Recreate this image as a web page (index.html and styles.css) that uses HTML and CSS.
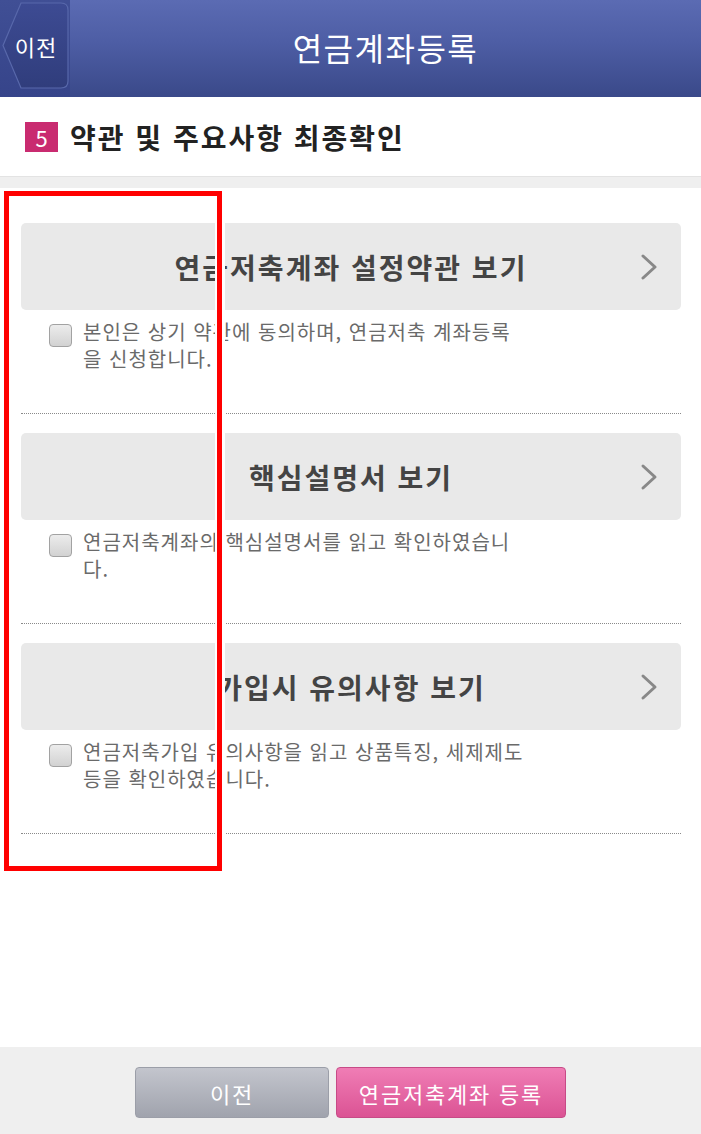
FILE: index.html
```html
<!DOCTYPE html>
<html lang="ko">
<head>
    <meta charset="UTF-8">
    <meta name="viewport" content="width=device-width, initial-scale=1.0">
    <title>연금계좌등록</title>
    <link rel="stylesheet" href="styles.css">
</head>
<body>
    <div class="page">
        <header class="topbar">
            <div class="back-cell">
                <a class="back-btn" href="#">
                    <svg class="back-shape" width="68" height="88" viewBox="0 0 68 88">
                        <defs>
                            <linearGradient id="backfill" x1="0" y1="0" x2="0" y2="1">
                                <stop offset="0" stop-color="#3d4b93"/>
                                <stop offset="1" stop-color="#303d7c"/>
                            </linearGradient>
                        </defs>
                        <path d="M19 1 H59 Q66 1 66 8 V79 Q66 86 59 86 H19 L1 43.5 Z" fill="url(#backfill)" stroke="#5868ab" stroke-width="1.2"/>
                    </svg>
                    <span class="back-label">이전</span>
                </a>
            </div>
            <h1>연금계좌등록</h1>
        </header>

        <div class="step">
            <span class="step-num">5</span>
            <h2>약관 및 주요사항 최종확인</h2>
        </div>
        <div class="divider"></div>

        <main class="terms">
            <section class="term">
                <button class="term-view">
                    <span class="term-title">연금저축계좌 설정약관 보기</span>
                    <svg class="chev" width="18" height="28" viewBox="0 0 18 28"><polyline points="3,3 15,14 3,25" fill="none" stroke="#888" stroke-width="3" stroke-linecap="round" stroke-linejoin="round"/></svg>
                </button>
                <label class="agree">
                    <span class="box"></span>
                    <span class="agree-text">본인은 상기 약관에 동의하며, 연금저축 계좌등록을 신청합니다.</span>
                </label>
            </section>
            <section class="term">
                <button class="term-view">
                    <span class="term-title">핵심설명서 보기</span>
                    <svg class="chev" width="18" height="28" viewBox="0 0 18 28"><polyline points="3,3 15,14 3,25" fill="none" stroke="#888" stroke-width="3" stroke-linecap="round" stroke-linejoin="round"/></svg>
                </button>
                <label class="agree">
                    <span class="box"></span>
                    <span class="agree-text">연금저축계좌의 핵심설명서를 읽고 확인하였습니다.</span>
                </label>
            </section>
            <section class="term">
                <button class="term-view">
                    <span class="term-title">가입시 유의사항 보기</span>
                    <svg class="chev" width="18" height="28" viewBox="0 0 18 28"><polyline points="3,3 15,14 3,25" fill="none" stroke="#888" stroke-width="3" stroke-linecap="round" stroke-linejoin="round"/></svg>
                </button>
                <label class="agree">
                    <span class="box"></span>
                    <span class="agree-text">연금저축가입 유의사항을 읽고 상품특징, 세제제도 등을 확인하였습니다.</span>
                </label>
            </section>
        </main>

        <footer class="actions">
            <button class="btn btn-prev">이전</button>
            <button class="btn btn-submit">연금저축계좌 등록</button>
        </footer>

        <div class="mark"></div>
    </div>
</body>
</html>
```

FILE: styles.css
```css
* {
    box-sizing: border-box;
}
body {
    margin: 0;
    font-family: "Noto Sans CJK KR", "Noto Sans", sans-serif;
    background: #fff;
}
.page {
    position: relative;
    width: 701px;
    min-height: 1134px;
    display: flex;
    flex-direction: column;
}
.topbar {
    display: flex;
    height: 97px;
    background: linear-gradient(#5b6bb3, #4d5da4 45%, #3a4989);
}
.back-cell {
    width: 70px;
    padding: 2px 0 0 2px;
    background: linear-gradient(#404f95, #36448a);
}
.back-btn {
    display: grid;
    width: 68px;
    height: 88px;
    text-decoration: none;
}
.back-shape,
.back-label {
    grid-area: 1 / 1;
}
.back-label {
    align-self: center;
    justify-self: center;
    color: #fff;
    font-size: 22px;
    letter-spacing: 1px;
    line-height: 1;
}
.topbar h1 {
    flex: 1;
    margin: 0;
    text-align: center;
    color: #fff;
    font-size: 32px;
    font-weight: normal;
    letter-spacing: 1.5px;
    line-height: 94px;
}
.step {
    display: flex;
    align-items: center;
    height: 79px;
    padding-left: 25px;
    gap: 12px;
}
.step-num {
    width: 33px;
    height: 30px;
    background: #c92b70;
    color: #fff;
    font-size: 22px;
    line-height: 30px;
    text-align: center;
}
.step h2 {
    margin: 0;
    font-size: 28px;
    font-weight: bold;
    letter-spacing: 2px;
    color: #222;
}
.divider {
    height: 12px;
    background: #efefef;
    border-top: 1px solid #e3e3e3;
}
.terms {
    padding: 35px 20px 0 21px;
}
.term {
    padding-bottom: 41px;
    margin-bottom: 20px;
    border-bottom: 1px dotted #8a8a8a;
}
.term:last-child {
    margin-bottom: 0;
}
.term + .term {
    margin-top: -1px;
}
.term-view {
    display: grid;
    grid-template-columns: 60px 1fr 60px;
    align-items: center;
    width: 100%;
    height: 87px;
    padding: 0;
    border: 0;
    border-radius: 5px;
    background: #e9e9e9;
    font-family: inherit;
    cursor: pointer;
}
.term-title {
    grid-column: 2;
    font-size: 28px;
    font-weight: bold;
    letter-spacing: 2px;
    color: #444;
    text-align: center;
}
.chev {
    grid-column: 3;
    justify-self: end;
    margin-right: 23px;
}
.agree {
    display: flex;
    align-items: flex-start;
    margin-top: 8px;
    padding-left: 28px;
}
.box {
    flex: none;
    width: 23px;
    height: 23px;
    margin-top: 6px;
    margin-right: 11px;
    border: 1px solid #a2a2a2;
    border-radius: 4px;
    background: linear-gradient(#ececec, #d2d2d2);
}
.agree-text {
    width: 443px;
    font-size: 20px;
    letter-spacing: 1px;
    line-height: 27px;
    color: #6a6a6a;
}
.actions {
    margin-top: auto;
    height: 87px;
    background: #efefef;
    display: flex;
    justify-content: center;
    align-items: flex-start;
    gap: 7px;
    padding-top: 20px;
}
.btn {
    height: 51px;
    border-radius: 4px;
    color: #fff;
    font-family: inherit;
    font-size: 22px;
    letter-spacing: 1.8px;
}
.btn-prev {
    width: 194px;
    border: 1px solid #9b9ea8;
    background: linear-gradient(#c3c5cd, #a0a3ad);
}
.btn-submit {
    width: 230px;
    border: 1px solid #c74b87;
    background: linear-gradient(#f07db5, #db5394);
}
.mark {
    position: absolute;
    left: 4px;
    top: 191px;
    width: 218px;
    height: 680px;
    border: 5px solid #f00;
    box-shadow: 0 0 0 3px #fff, inset 0 0 0 2px #fff;
}
```
